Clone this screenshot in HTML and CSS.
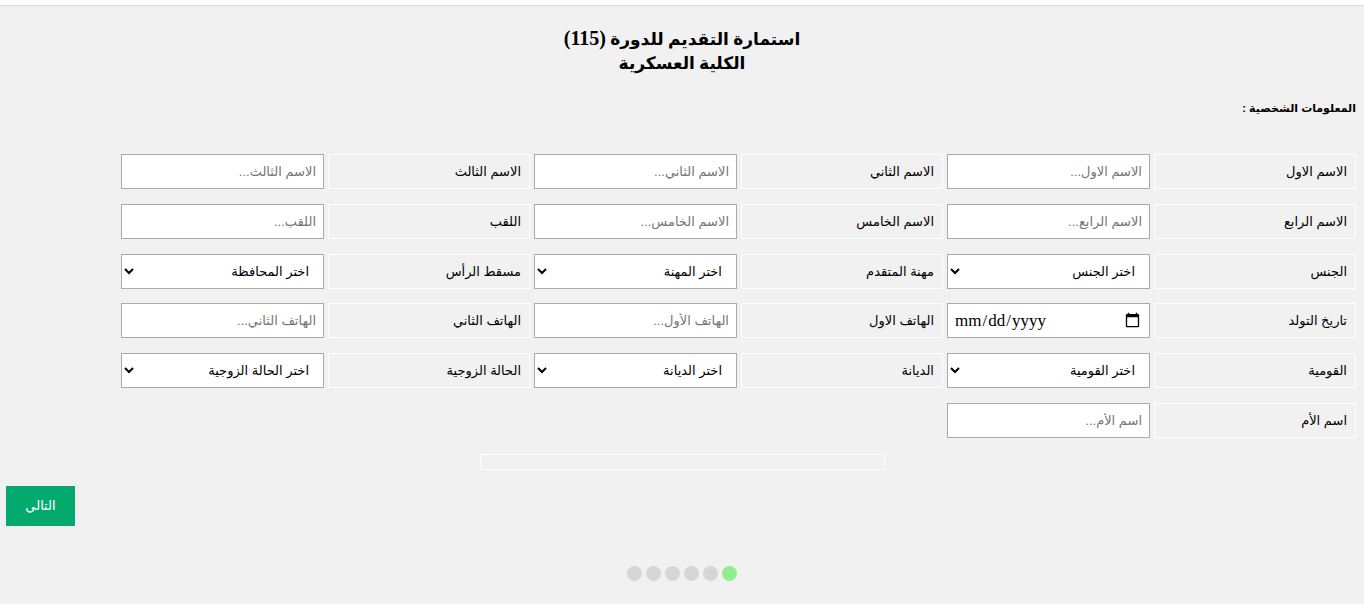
FILE: index.html
```html
<!DOCTYPE html>
<html lang="ar">
<head>
  <meta charset="UTF-8">
  <meta name="viewport" content="width=device-width, initial-scale=1.0">
  <title>استمارة التقديم</title>
  <link rel="stylesheet" href="styles.css">
</head>
<body>
  <form class="reg-form" dir="rtl">
    <h1 class="title">استمارة التقديم للدورة <span class="num">(115)</span><br>الكلية العسكرية</h1>

    <div class="tab">
      <p class="section">المعلومات الشخصية :</p>

      <div class="fields">
        <label class="cell">الاسم الاول</label>
        <input type="text" class="field" placeholder="الاسم الاول...">
        <label class="cell">الاسم الثاني</label>
        <input type="text" class="field" placeholder="الاسم الثاني...">
        <label class="cell">الاسم الثالث</label>
        <input type="text" class="field" placeholder="الاسم الثالث...">

        <label class="cell">الاسم الرابع</label>
        <input type="text" class="field" placeholder="الاسم الرابع...">
        <label class="cell">الاسم الخامس</label>
        <input type="text" class="field" placeholder="الاسم الخامس...">
        <label class="cell">اللقب</label>
        <input type="text" class="field" placeholder="اللقب...">

        <label class="cell">الجنس</label>
        <select class="field pick"><option>اختر الجنس</option></select>
        <label class="cell">مهنة المتقدم</label>
        <select class="field pick"><option>اختر المهنة</option></select>
        <label class="cell">مسقط الرأس</label>
        <select class="field pick"><option>اختر المحافظة</option></select>

        <label class="cell">تاريخ التولد</label>
        <input type="date" class="field date" dir="ltr">
        <label class="cell">الهاتف الاول</label>
        <input type="text" class="field" placeholder="الهاتف الأول...">
        <label class="cell">الهاتف الثاني</label>
        <input type="text" class="field" placeholder="الهاتف الثاني...">

        <label class="cell">القومية</label>
        <select class="field pick"><option>اختر القومية</option></select>
        <label class="cell">الديانة</label>
        <select class="field pick"><option>اختر الديانة</option></select>
        <label class="cell">الحالة الزوجية</label>
        <select class="field pick"><option>اختر الحالة الزوجية</option></select>

        <label class="cell">اسم الأم</label>
        <input type="text" class="field" placeholder="اسم الأم...">
      </div>
    </div>

    <div class="message"></div>

    <div class="actions">
      <button type="button" class="next-btn">التالي</button>
    </div>

    <div class="steps">
      <span class="step"></span>
      <span class="step"></span>
      <span class="step"></span>
      <span class="step"></span>
      <span class="step"></span>
      <span class="step active"></span>
    </div>
  </form>
</body>
</html>
```

FILE: styles.css
```css
body {
  margin: 0;
  background-color: #fff;
  font-family: "Liberation Sans", "DejaVu Sans", sans-serif;
  color: #000;
}

.reg-form {
  margin-top: 5px;
  border-top: 1px solid #ddd;
  background-color: #f1f1f1;
  height: 599px;
  box-sizing: border-box;
  padding: 22px 8px 0 8px;
}

.title {
  margin: 0;
  text-align: center;
  font-family: "Liberation Serif", "DejaVu Sans", serif;
  font-size: 17px;
  line-height: 24px;
  font-weight: bold;
}

.title .num {
  font-size: 20px;
  line-height: 20px;
}

.section {
  margin: 24px 0 0 0;
  font-size: 11px;
  line-height: 16px;
  font-weight: bold;
}

.fields {
  display: grid;
  grid-template-columns: 202px 203px 202px 203px 202px 203px;
  grid-auto-rows: 35px;
  column-gap: 4px;
  row-gap: 14.75px;
  margin-top: 38px;
}

.cell {
  display: flex;
  align-items: center;
  box-sizing: border-box;
  border: 1px solid #fff;
  padding-right: 8px;
  font-size: 13px;
}

.field {
  box-sizing: border-box;
  width: 100%;
  height: 35px;
  margin: 0;
  border: 1px solid #aaa;
  border-radius: 0;
  background-color: #fff;
  padding: 0 7px;
  font-family: "Liberation Sans", "DejaVu Sans", sans-serif;
  font-size: 13px;
  color: #000;
}

.field::placeholder {
  color: #757575;
}

.pick {
  padding-right: 10px;
}

.date {
  font-family: "Liberation Serif", serif;
  font-size: 17px;
  padding: 0 6px;
}

.message {
  width: 405px;
  height: 16px;
  box-sizing: border-box;
  margin: 16px auto 0 auto;
  border: 1px solid #fff;
}

.actions {
  display: flex;
  direction: ltr;
  justify-content: flex-start;
  margin: 16px 0 0 -2px;
}

.next-btn {
  width: 69px;
  height: 40px;
  border: none;
  background-color: #04aa6d;
  color: #fff;
  font-family: "Liberation Sans", "DejaVu Sans", sans-serif;
  font-size: 13px;
  cursor: pointer;
}

.steps {
  display: flex;
  direction: ltr;
  justify-content: center;
  margin-top: 40px;
}

.step {
  width: 15px;
  height: 15px;
  margin: 0 2px;
  border-radius: 50%;
  background-color: #d6d6d6;
}

.step.active {
  background-color: #90ee90;
}
```
